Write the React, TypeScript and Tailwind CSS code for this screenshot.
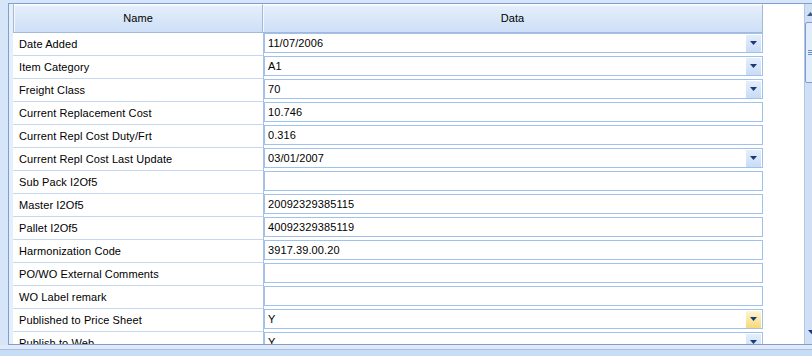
import React from 'react';

type Row = { name: string; value: string; combo?: boolean; hot?: boolean };

const rows: Row[] = [
  { name: 'Date Added', value: '11/07/2006', combo: true },
  { name: 'Item Category', value: 'A1', combo: true },
  { name: 'Freight Class', value: '70', combo: true },
  { name: 'Current Replacement Cost', value: '10.746' },
  { name: 'Current Repl Cost Duty/Frt', value: '0.316' },
  { name: 'Current Repl Cost Last Update', value: '03/01/2007', combo: true },
  { name: 'Sub Pack I2Of5', value: '' },
  { name: 'Master I2Of5', value: '20092329385115' },
  { name: 'Pallet I2Of5', value: '40092329385119' },
  { name: 'Harmonization Code', value: '3917.39.00.20' },
  { name: 'PO/WO External Comments', value: '' },
  { name: 'WO Label remark', value: '' },
  { name: 'Published to Price Sheet', value: 'Y', combo: true, hot: true },
  { name: 'Publish to Web', value: 'Y', combo: true },
];

const DropArrow = () => (
  <svg width="7" height="4" viewBox="0 0 7 4">
    <path d="M0 0h7L3.5 4z" fill="#1b3a73" />
  </svg>
);

const ComboButton = ({ hot }: { hot?: boolean }) => (
  <div
    className={
      hot
        ? 'ml-auto mr-px flex h-[17px] w-[15px] items-center justify-center bg-gradient-to-b from-[#fdf5d2] to-[#f8d878]'
        : 'ml-auto mr-px flex h-[17px] w-[15px] items-center justify-center bg-gradient-to-b from-[#e4eefc] to-[#c8dcf7]'
    }
  >
    <DropArrow />
  </div>
);

const GridRow = ({ row }: { row: Row }) => (
  <div className="flex h-[23px] shrink-0">
    <div className="flex h-full w-[250px] items-center border-b border-[#c5d8f0] pl-[6px]">
      {row.name}
    </div>
    <div className="h-full w-[500px] border-l border-[#a9c2e4]">
      <div className="flex h-[20px] items-center border border-[#a0c1ec] bg-white pl-[3px]">
        <span>{row.value}</span>
        {row.combo ? <ComboButton hot={row.hot} /> : null}
      </div>
    </div>
  </div>
);

export default function App() {
  return (
    <div
      className="relative h-[356px] w-[812px] overflow-hidden bg-[#d6e5f7] text-[11px] tracking-[0.1px] text-black"
      style={{ fontFamily: '"Liberation Sans", Arial, sans-serif' }}
    >
      <div className="flex h-[345px] pl-[8px] pt-[3px]">
        <div className="flex flex-1 border-l border-t border-b border-[#7f9fd2] bg-[#e6eef9] pl-[4px]">
          {/* grid */}
          <div className="flex w-[791px] flex-col overflow-hidden bg-white">
            <div className="flex h-[29px] shrink-0">
              <div className="flex w-[250px] items-center justify-center border border-[#a3b9d8] border-t-white bg-gradient-to-b from-[#e6effb] to-[#cddff7] shadow-[inset_1px_1px_0_#f4f8fe]">
                Name
              </div>
              <div className="flex w-[500px] items-center justify-center border border-l-0 border-[#a3b9d8] border-t-white bg-gradient-to-b from-[#e6effb] to-[#cddff7] shadow-[inset_1px_1px_0_#f4f8fe]">
                Data
              </div>
            </div>
            {rows.map((r) => (
              <GridRow key={r.name} row={r} />
            ))}
          </div>
          {/* vertical scrollbar */}
          <div className="flex w-[20px] flex-col border-l border-[#b2c8e6] bg-[#cfe0f6]">
            <div className="flex h-[18px] items-start pl-[2px] pt-[8px]">
              <svg width="7" height="4" viewBox="0 0 7 4">
                <path d="M3.5 0L7 4H0z" fill="#44597d" />
              </svg>
            </div>
            <div className="flex h-[61px] items-center rounded-[2px] border border-[#7c9dcf] bg-[#e3ecf9] pl-[2px]">
              <div className="flex flex-col gap-[1px]">
                <div className="h-px w-[7px] bg-[#6d8cbf]" />
                <div className="h-px w-[7px] bg-[#6d8cbf]" />
                <div className="h-px w-[7px] bg-[#6d8cbf]" />
              </div>
            </div>
            <div className="flex-1" />
            <div className="flex h-[18px] items-start pl-[3px] pt-[4px]">
              <DropArrow />
            </div>
          </div>
        </div>
      </div>
      <div className="h-[4px] bg-[#e2eaf6]" />
      <div className="h-[7px] border-t border-[#a7bfe2] bg-[#c7dcf6]" />
    </div>
  );
}
